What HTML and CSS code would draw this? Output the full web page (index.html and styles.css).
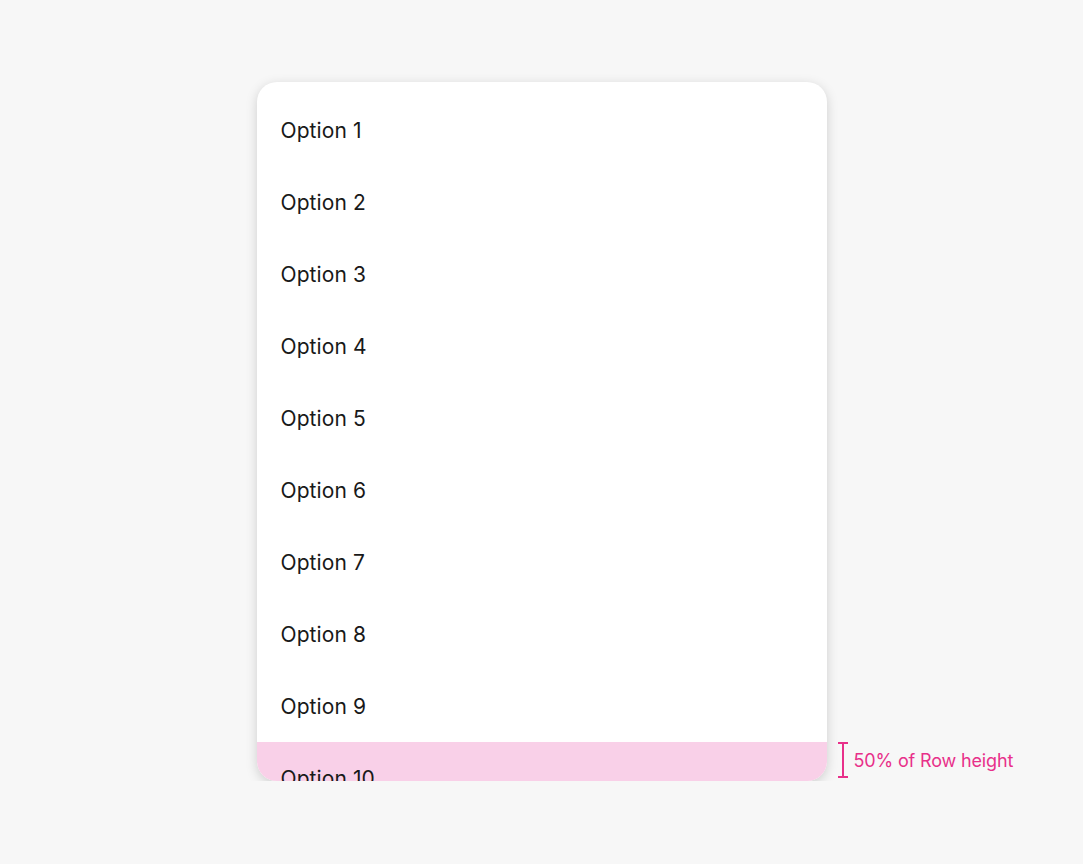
FILE: index.html
```html
<!DOCTYPE html>
<html lang="en">
<head>
  <meta charset="UTF-8" />
  <meta name="viewport" content="width=device-width, initial-scale=1" />
  <title>Listbox row height</title>
  <link rel="stylesheet" href="styles.css">
</head>
<body>
  <div class="stage">
    <div class="listbox">
      <div class="options">
        <div class="option">Option 1</div>
        <div class="option">Option 2</div>
        <div class="option">Option 3</div>
        <div class="option">Option 4</div>
        <div class="option">Option 5</div>
        <div class="option">Option 6</div>
        <div class="option">Option 7</div>
        <div class="option">Option 8</div>
        <div class="option">Option 9</div>
        <div class="option partial">Option 10</div>
      </div>
      <div class="annotation">
        <span class="bracket"></span>
        <span class="label">50% of Row height</span>
      </div>
    </div>
  </div>
</body>
</html>
```

FILE: styles.css
```css
:root {
  --bg: #f7f7f7;
  --card: #fff;
  --text: #191919;
  --pink: #f9d0e8;
  --accent: #e8308a;
}
body {
  background: var(--bg);
  color: var(--text);
  font-family: Inter, "Noto Sans", sans-serif;
  margin: 0;
}
.stage {
  display: flex;
  justify-content: center;
  padding-top: 82px;
}
.listbox {
  position: relative;
  width: 570px;
  height: 699px;
  background: var(--card);
  border-radius: 20px;
  box-shadow: 0 3px 12px rgba(0, 0, 0, 0.17);
}
.options {
  height: 100%;
  padding-top: 12px;
  box-sizing: border-box;
  border-radius: 20px;
  overflow: hidden;
}
.option {
  height: 72px;
  display: flex;
  align-items: center;
  padding-left: 24px;
  font-size: 21px;
  letter-spacing: 0.1px;
}
.option.partial {
  background: var(--pink);
}
.annotation {
  position: absolute;
  left: 100%;
  bottom: 3px;
  height: 36px;
  margin-left: 11px;
  display: flex;
  align-items: center;
  gap: 6px;
  color: var(--accent);
  white-space: nowrap;
}
.bracket {
  width: 10px;
  height: 100%;
  box-sizing: border-box;
  border-top: 2px solid var(--accent);
  border-bottom: 2px solid var(--accent);
  background: linear-gradient(var(--accent), var(--accent)) center / 2px 100% no-repeat;
}
.label {
  font-size: 18px;
  letter-spacing: -0.15px;
}
```
